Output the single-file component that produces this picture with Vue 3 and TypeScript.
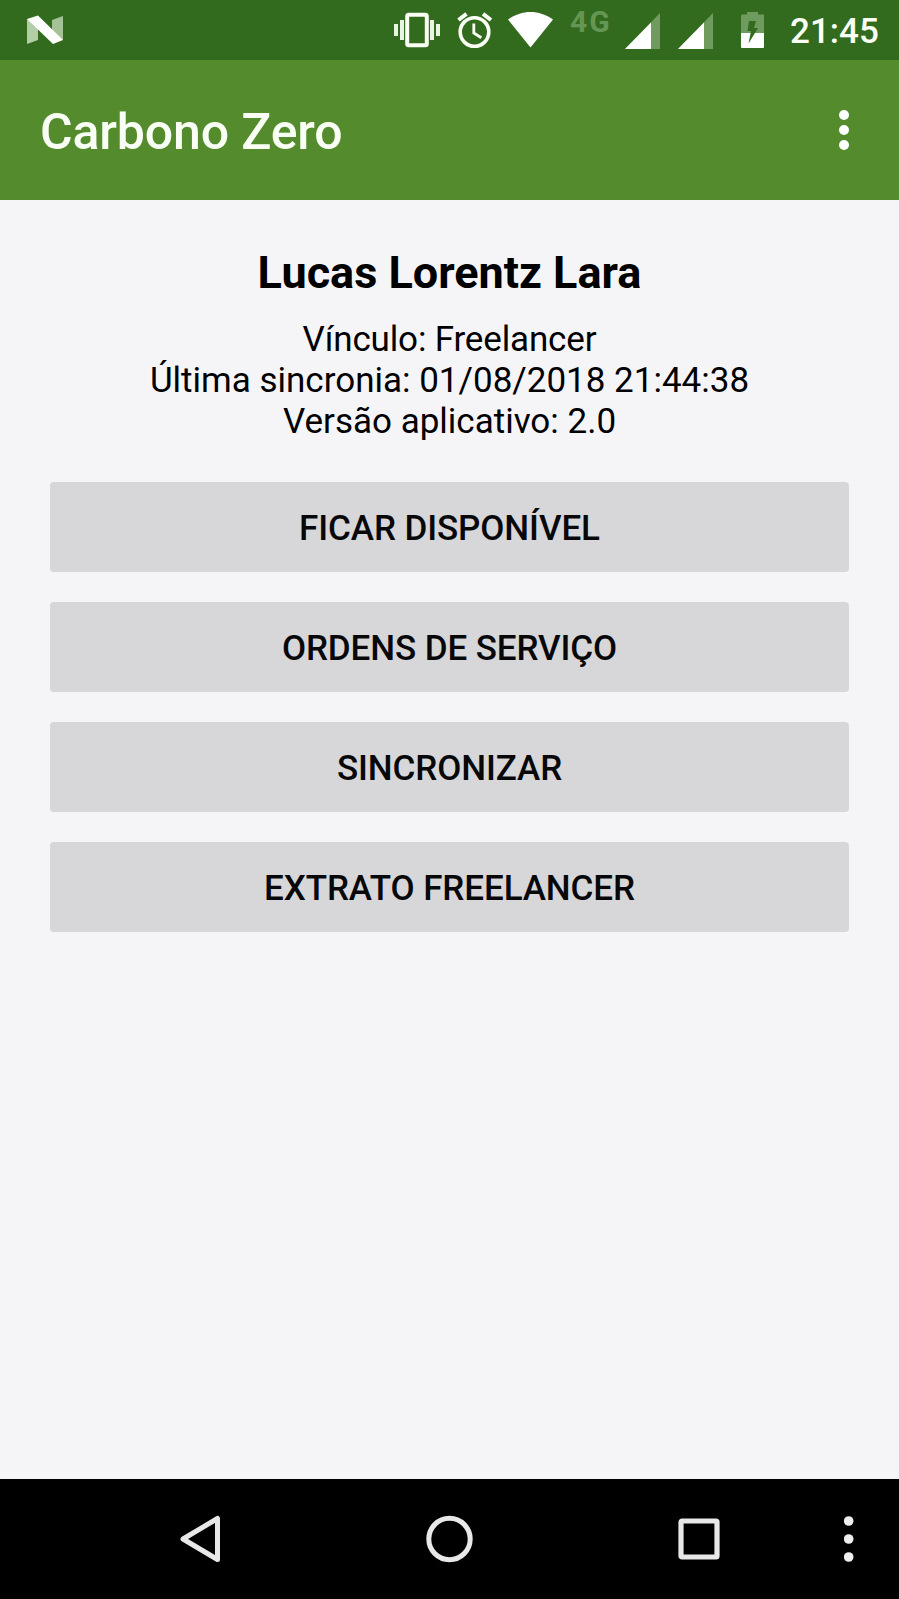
<script setup lang="ts">
interface Action {
  id: string
  label: string
}

const user = {
  name: 'Lucas Lorentz Lara',
  lines: [
    'Vínculo: Freelancer',
    'Última sincronia: 01/08/2018 21:44:38',
    'Versão aplicativo: 2.0',
  ],
}

const actions: Action[] = [
  { id: 'available', label: 'Ficar disponível' },
  { id: 'orders', label: 'Ordens de serviço' },
  { id: 'sync', label: 'Sincronizar' },
  { id: 'statement', label: 'Extrato freelancer' },
]

const signals: string[] = ['sim1', 'sim2']
</script>

<template>
  <div class="screen">
    <header class="status">
      <svg class="nougat" width="36" height="30" viewBox="0 0 36 30">
        <path d="M0 4L11 9V25L0 29Z" fill="#b3cda6" />
        <path d="M25 5L36 1V25L25 20Z" fill="#a3c297" />
        <path d="M0 4L11 0.5L36 25L26 29Z" fill="#fff" />
      </svg>
      <div class="tray">
        <svg class="vibrate" width="46" height="36" viewBox="0 0 46 36">
          <rect x="13.2" y="2.7" width="19.6" height="30.6" rx="1.5" fill="none" stroke="#fafff5" stroke-width="4" />
          <path d="M0 12h4v12H0zM6 8h4v20H6zM36 8h4v20h-4zM42 12h4v12h-4z" fill="#e9f5e2" />
        </svg>
        <svg class="alarm" width="36" height="37" viewBox="0 0 36 37">
          <circle cx="17.5" cy="20" r="14.3" fill="none" stroke="#fafff5" stroke-width="3.6" />
          <path d="M1.5 8L9.5 1.8M26 1.8L34 8" fill="none" stroke="#fafff5" stroke-width="4" />
          <path d="M16.8 11.5V21L24.3 25.8" fill="none" stroke="#fafff5" stroke-width="2.8" />
        </svg>
        <svg class="wifi" width="45" height="36" viewBox="0 0 45 36">
          <path d="M0 7.5C14 -2.5 31 -2.5 45 7.5L22.5 35.5Z" fill="#fff" />
        </svg>
        <span class="network">4G</span>
        <svg v-for="sim in signals" :key="sim" class="signal" width="36" height="36" viewBox="0 0 36 36">
          <path d="M0 36L35 0V36Z" fill="#709b5e" />
          <path d="M0 36L26 9.5V36Z" fill="#fff" />
        </svg>
        <svg class="battery" width="24" height="36" viewBox="0 0 24 36">
          <path d="M0 3.5Q0 2.5 1 2.5H6V0H17V2.5H22Q23 2.5 23 3.5V21H0Z" fill="#709b5e" />
          <path d="M0 21H23V35Q23 36 22 36H1Q0 36 0 35Z" fill="#fff" />
          <path d="M8 9H15L13 16H17L7.5 31.5L10 19H6.5Z" fill="#336b1e" />
        </svg>
        <span class="clock">21:45</span>
      </div>
    </header>

    <div class="appbar">
      <h1 class="title">Carbono Zero</h1>
      <svg class="more" width="10" height="40" viewBox="0 0 10 40">
        <circle cx="5" cy="5" r="5" />
        <circle cx="5" cy="20" r="5" />
        <circle cx="5" cy="35" r="5" />
      </svg>
    </div>

    <main class="content">
      <h2 class="name">{{ user.name }}</h2>
      <div class="details">
        <p v-for="line in user.lines" :key="line">{{ line }}</p>
      </div>
      <div class="actions">
        <button v-for="action in actions" :key="action.id" type="button">{{ action.label }}</button>
      </div>
    </main>

    <nav class="navbar">
      <svg class="back" width="42" height="48" viewBox="0 0 42 48">
        <path d="M37.5 3.5V44.5L3 24Z" fill="none" stroke="#e8e8e8" stroke-width="5" stroke-linejoin="round" />
      </svg>
      <svg class="home" width="48" height="48" viewBox="0 0 48 48">
        <circle cx="24.5" cy="24" r="20.7" fill="none" stroke="#e8e8e8" stroke-width="5" />
      </svg>
      <svg class="recent" width="42" height="42" viewBox="0 0 42 42">
        <rect x="3" y="3" width="36" height="36" rx="1" fill="none" stroke="#e8e8e8" stroke-width="5.2" />
      </svg>
      <svg class="menu" width="10" height="48" viewBox="0 0 10 48" fill="#eeeeee">
        <circle cx="4.7" cy="6" r="4.8" />
        <circle cx="4.7" cy="24" r="4.8" />
        <circle cx="4.7" cy="42" r="4.8" />
      </svg>
    </nav>
  </div>
</template>

<style>
body {
  margin: 0;
}
</style>

<style scoped>
.screen {
  display: flex;
  flex-direction: column;
  width: 899px;
  height: 1599px;
  overflow: hidden;
  background: #f5f5f8;
  color: #000;
  font-family: Roboto, 'Liberation Sans', sans-serif;
}
svg {
  display: block;
  flex: none;
}
.status {
  display: flex;
  justify-content: space-between;
  box-sizing: border-box;
  flex: none;
  height: 60px;
  padding: 0 21px 0 27px;
  background: #336b1e;
  color: #fafff5;
}
.nougat {
  margin-top: 15px;
}
.tray {
  display: flex;
  align-items: flex-start;
  width: 484px;
}
.vibrate {
  margin-top: 12px;
}
.alarm {
  margin: 12px 0 0 17px;
}
.wifi {
  margin: 12px 0 0 15px;
}
.network {
  flex: none;
  width: 55px;
  margin: 4px 0 0 17px;
  color: #659653;
  font-size: 30px;
  font-weight: 700;
  line-height: 35px;
  letter-spacing: 2px;
}
.signal {
  margin: 13px 17px 0 0;
}
.battery {
  margin: 12px 0 0 10px;
}
.clock {
  margin-left: 25px;
  font-size: 35px;
  font-weight: 500;
  line-height: 64px;
  white-space: nowrap;
}
.appbar {
  display: flex;
  align-items: center;
  justify-content: space-between;
  box-sizing: border-box;
  flex: none;
  height: 140px;
  padding: 0 50px 0 40px;
  background: #548c2d;
  color: #fafff5;
}
.title {
  margin: 3px 0 0;
  font-size: 50px;
  font-weight: 500;
  line-height: 60px;
  letter-spacing: -0.15px;
}
.more {
  fill: #fff;
}
.content {
  flex: 1;
  padding: 0 50px;
  text-align: center;
}
.name {
  margin: 46px 0 0;
  font-size: 45px;
  font-weight: 700;
  line-height: 53px;
}
.details {
  margin-top: 20px;
  font-size: 35px;
  line-height: 41px;
}
.details p {
  margin: 0;
}
.details p:first-child {
  letter-spacing: -0.15px;
}
.actions {
  display: flex;
  flex-direction: column;
  gap: 30px;
  margin-top: 40px;
}
.actions button {
  height: 90px;
  padding: 3px 0 0;
  border: 0;
  border-radius: 4px;
  background: #d7d7d9;
  color: #08080a;
  font: inherit;
  font-size: 35px;
  font-weight: 500;
  letter-spacing: -0.1px;
  text-transform: uppercase;
}
.navbar {
  display: flex;
  align-items: center;
  flex: none;
  height: 120px;
  background: #000;
}
.back {
  margin-left: 180px;
}
.home {
  margin-left: 203px;
}
.recent {
  margin-left: 205px;
}
.menu {
  margin-left: 124px;
}
</style>
